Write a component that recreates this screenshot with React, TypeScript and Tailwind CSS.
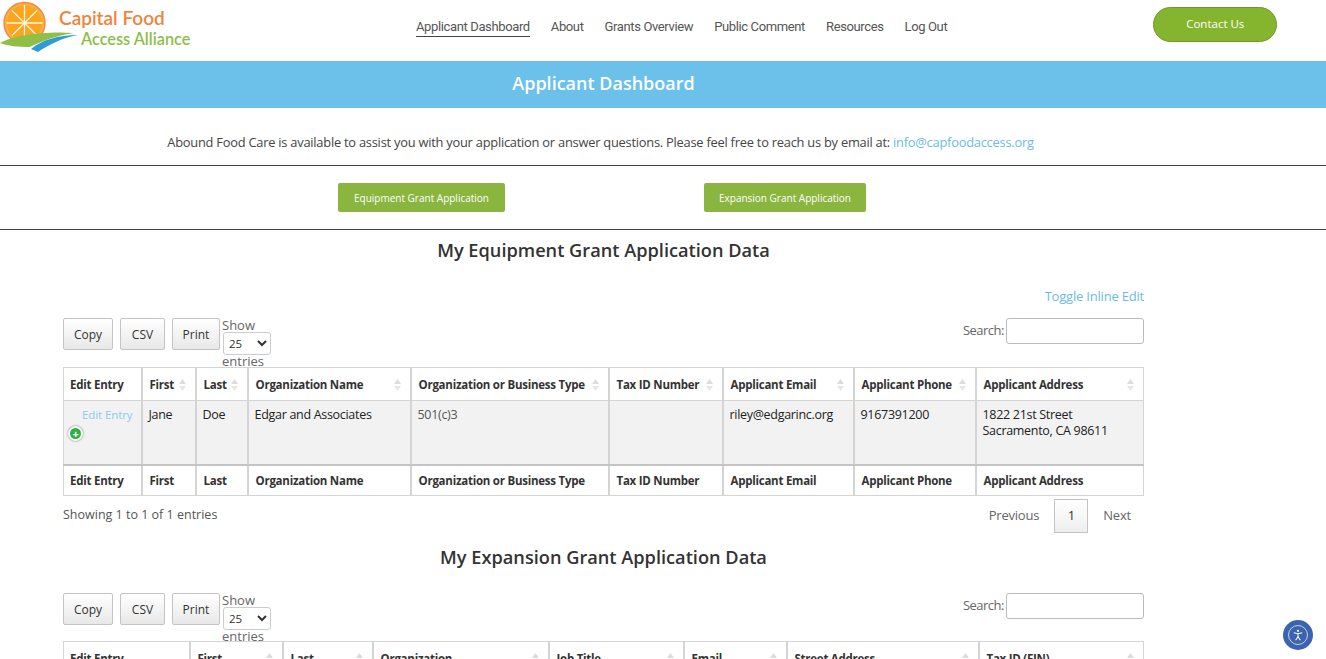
import React from "react";

function Sort({ up = true }: { up?: boolean }) {
  return (
    <svg width="7" height="12" viewBox="0 0 7 12" className="shrink-0">
      <path d="M3.5 0L7 5H0z" fill="#dcdcdc" />
      {up ? <path d="M3.5 12L0 7h7z" fill="#e6e6e6" /> : null}
    </svg>
  );
}

function Logo() {
  return (
    <div className="relative w-[200px] h-[61px] shrink-0">
      <svg width="80" height="54" viewBox="0 0 80 54" className="absolute left-0 top-0">
        <circle cx="24.5" cy="23" r="20.5" fill="#fbb03b" stroke="#f0874a" strokeWidth="1.4" />
        <circle cx="24.5" cy="23" r="17.5" fill="#f9a51f" />
        <g stroke="#fff3d8" strokeWidth="1.3">
          <path d="M24.5 5v36M6.5 23h36M12 10.5l25 25M37 10.5l-25 25" />
        </g>
        <path d="M0 43C14 35 46 31 74 33 54 36 40 42 30 47 18 47 8 46 0 43z" fill="#8fbf45" />
        <path d="M31 49C42 40 58 35 78 35 62 38 50 44 38 52z" fill="#2f9bd7" />
      </svg>
      <div className="absolute left-[59px] top-[6px] text-[19px] leading-[24px] font-semibold text-[#f0843c] font-['Lato',sans-serif]">
        Capital Food
      </div>
      <div className="absolute left-[81px] top-[28px] text-[16.3px] leading-[22px] font-semibold text-[#8cbf4a] font-['Lato',sans-serif]">
        Access Alliance
      </div>
    </div>
  );
}

function Toolbar() {
  const btn =
    "h-[32px] border border-[#c4c4c4] rounded-[2px] bg-gradient-to-b from-white to-[#e8e8e8] pt-[1px] text-[12px] text-[#333] flex items-center justify-center";
  return (
    <div className="flex items-start justify-between">
      <div className="flex items-start">
        <button className={`${btn} w-[50px]`}>Copy</button>
        <button className={`${btn} w-[45px] ml-[7px]`}>CSV</button>
        <button className={`${btn} w-[48px] ml-[7px]`}>Print</button>
        <div className="ml-[2px] w-[50px] text-[13px] leading-[14px] text-[#666]">
          <div>Show</div>
          <select
            defaultValue="25"
            className="block ml-[1px] w-[48px] h-[23px] border border-[#ccc] rounded-[3px] bg-white text-[11.5px] text-[#333] pl-[1px]"
          >
            <option>25</option>
          </select>
          <div className="-mt-[1px]">entries</div>
        </div>
      </div>
      <div className="flex items-center text-[13px] tracking-[-0.5px] text-[#666]">
        <span className="mr-[2px]">Search:</span>
        <input className="w-[138px] h-[26px] border border-[#bbb] rounded-[3px] bg-white" />
      </div>
    </div>
  );
}

const cols1 = [
  ["Edit Entry", 78],
  ["First", 54],
  ["Last", 52],
  ["Organization Name", 163],
  ["Organization or Business Type", 198],
  ["Tax ID Number", 114],
  ["Applicant Email", 131],
  ["Applicant Phone", 122],
  ["Applicant Address", 168],
] as const;

const cols2 = [
  ["Edit Entry", 126],
  ["First", 93],
  ["Last", 90],
  ["Organization", 176],
  ["Job Title", 135],
  ["Email", 103],
  ["Street Address", 192],
  ["Tax ID (FIN)", 165],
] as const;

const thCls =
  "border border-x-2 border-[#d4d4d4] first:border-l last:border-r text-left align-middle font-bold text-[11.5px] tracking-[-0.25px] text-[#333] pl-[7px] first:pl-[6px] pr-[9px] pt-[1px] whitespace-nowrap overflow-hidden";

function Head({ cols, sort = true, h }: { cols: readonly (readonly [string, number])[]; sort?: boolean; h: number }) {
  return (
    <tr style={{ height: h }}>
      {cols.map(([c], i) => (
        <th key={c} className={thCls}>
          <div className="flex items-center justify-between">
            <span>{c}</span>
            {sort && i > 0 ? <Sort /> : null}
          </div>
        </th>
      ))}
    </tr>
  );
}

const tdCls =
  "border border-x-2 border-[#d4d4d4] first:border-l last:border-r border-b-2 border-b-[#c4c4c4] align-top text-[12.5px] tracking-[-0.3px] leading-[16px] text-[#222] pt-[6px] px-[6px] bg-[#f2f2f2]";

export default function App() {
  return (
    <div className="relative h-[659px] w-[1326px] overflow-hidden bg-white font-['Open_Sans',sans-serif]">
      <header className="flex h-[61px] items-start">
        <Logo />
        <nav className="ml-[216px] mt-[18px] flex gap-[21px] text-[13px] tracking-[-0.37px] leading-[18px] text-[#555] font-['Roboto',sans-serif]">
          <a className="border-b border-[#444]">Applicant Dashboard</a>
          <a>About</a>
          <a>Grants Overview</a>
          <a>Public Comment</a>
          <a>Resources</a>
          <a>Log Out</a>
        </nav>
        <button className="ml-[206px] mt-[7px] h-[35px] w-[124px] rounded-full border border-[#6f9a22] bg-[#85b52e] pb-[2px] text-[11.5px] font-medium text-white">
          Contact Us
        </button>
      </header>

      <div className="flex h-[47px] items-center justify-center bg-[#6bc1e9] pr-[119px] pb-[2px]">
        <h1 className="text-[18px] font-semibold text-white">Applicant Dashboard</h1>
      </div>

      <div className="flex h-[58px] items-center justify-center border-b border-[#444] pr-[125px] pt-[13px] text-[12.85px] tracking-[-0.23px] text-[#444]">
        <span>
          Abound Food Care is available to assist you with your application or answer questions. Please feel free to
          reach us by email at: <a className="text-[#6bbbe3]">info@capfoodaccess.org</a>
        </span>
      </div>

      <div className="flex h-[64px] items-start border-b border-[#444] pt-[17px]">
        <button className="ml-[338px] h-[29px] w-[167px] rounded-[2px] bg-[#8ab63f] pt-[1px] text-[10px] text-white">
          Equipment Grant Application
        </button>
        <button className="ml-[199px] h-[29px] w-[162px] rounded-[2px] bg-[#8ab63f] pt-[1px] text-[10px] text-white">
          Expansion Grant Application
        </button>
      </div>

      <main className="ml-[63px] w-[1081px]">
        <h2 className="mt-[7px] h-[26px] text-center text-[18.2px] leading-[26px] font-semibold text-[#333]">
          My Equipment Grant Application Data
        </h2>
        <div className="mt-[23px] h-[25px] text-right text-[13px] tracking-[-0.2px] leading-[20px] text-[#6bbbe3]">
          Toggle Inline Edit
        </div>
        <div className="mt-[7px] h-[49px]">
          <Toolbar />
        </div>
        <table className="table-fixed w-[1080px] border-collapse">
          <colgroup>
            {cols1.map(([c, w]) => (
              <col key={c} style={{ width: w }} />
            ))}
          </colgroup>
          <thead>
            <Head cols={cols1} h={33} />
          </thead>
          <tbody>
            <tr className="h-[64px]">
              <td className={`${tdCls} bg-[#ececec]`}>
                <div className="pr-[2px] text-right text-[11.5px] tracking-[-0.1px] text-[#8ccbec]">Edit Entry</div>
                <div className="relative mt-[3px] ml-[-2px] flex h-[15px] w-[15px] items-center justify-center rounded-full border-2 border-white bg-[#2cb044] text-[11px] leading-none font-bold text-white shadow-[0_0_2px_#666]">
                  +
                </div>
              </td>
              <td className={tdCls}>Jane</td>
              <td className={tdCls}>Doe</td>
              <td className={tdCls}>Edgar and Associates</td>
              <td className={`${tdCls} text-[#555]`}>501(c)3</td>
              <td className={tdCls}></td>
              <td className={tdCls}>riley@edgarinc.org</td>
              <td className={tdCls}>9167391200</td>
              <td className={tdCls}>
                1822 21st Street
                <br />
                Sacramento, CA 98611
              </td>
            </tr>
          </tbody>
          <tfoot>
            <Head cols={cols1} sort={false} h={31} />
          </tfoot>
        </table>
        <div className="mt-[3px] flex h-[34px] items-center justify-between text-[12.5px] text-[#555]">
          <span className="-mt-[1px]">Showing 1 to 1 of 1 entries</span>
          <div className="mr-[13px] flex items-center text-[13px] tracking-[-0.2px] text-[#666]">
            <span>Previous</span>
            <span className="mx-[15px] flex h-[34px] w-[34px] items-center justify-center border border-[#c4c4c4] bg-gradient-to-b from-white to-[#eee] text-[#333]">
              1
            </span>
            <span>Next</span>
          </div>
        </div>
        <h2 className="mt-[11px] h-[26px] text-center text-[18.2px] leading-[26px] font-semibold text-[#333]">
          My Expansion Grant Application Data
        </h2>
        <div className="mt-[23px] h-[48px]">
          <Toolbar />
        </div>
        <table className="table-fixed w-[1080px] border-collapse">
          <colgroup>
            {cols2.map(([c, w]) => (
              <col key={c} style={{ width: w }} />
            ))}
          </colgroup>
          <thead>
            <Head cols={cols2} h={33} />
          </thead>
        </table>
      </main>

      <div className="absolute left-[1283px] top-[620px] flex h-[30px] w-[30px] items-center justify-center rounded-full bg-[#3b63b0]">
        <svg width="22" height="22" viewBox="0 0 22 22" fill="none" stroke="#fff">
          <circle cx="11" cy="11" r="9.5" strokeWidth="0.7" />
          <circle cx="11" cy="6.8" r="1.1" fill="#fff" stroke="none" />
          <path d="M6.8 8.8l4.2.9 4.2-.9M11 9.7v3M11 12.7l-2.4 3.6M11 12.7l2.4 3.6" strokeWidth="1.1" />
        </svg>
      </div>
    </div>
  );
}
